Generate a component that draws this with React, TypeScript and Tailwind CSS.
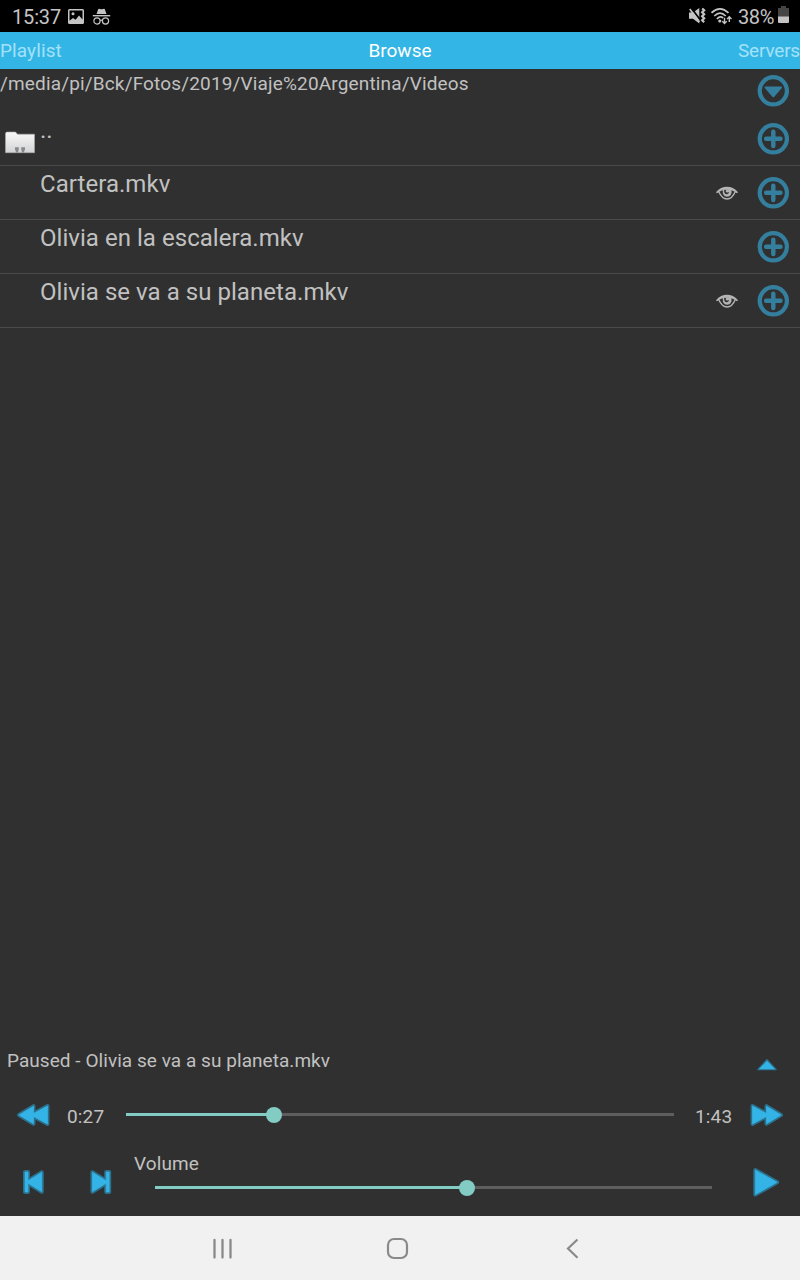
import type { ReactNode } from "react";

const files = [
  { name: "Cartera.mkv", watched: true },
  { name: "Olivia en la escalera.mkv", watched: false },
  { name: "Olivia se va a su planeta.mkv", watched: true },
];

function RoundIcon({ children }: { children: ReactNode }) {
  return (
    <svg className="h-8 w-8 shrink-0" viewBox="0 0 32 32" fill="none">
      <circle cx="16.300" cy="15.800" r="13.600" stroke="#347f9e" strokeWidth="4.200" />
      {children}
    </svg>
  );
}

function AddIcon() {
  return (
    <RoundIcon>
      <path d="M16.300 8.600V23M9.100 15.800H23.500" stroke="#347f9e" strokeWidth="4.400" strokeLinecap="round" />
    </RoundIcon>
  );
}

function DropIcon() {
  return (
    <RoundIcon>
      <path d="M8.500 12.400H24.100L16.300 21.300Z" fill="#347f9e" stroke="#347f9e" strokeWidth="2" strokeLinejoin="round" />
    </RoundIcon>
  );
}

function EyeIcon() {
  return (
    <svg className="h-4 w-6 shrink-0" viewBox="0 0 24 16" fill="none">
      <path d="M3.800 6.800C6 11.800 8.700 14 12.100 14s6-2.200 8.100-7.200" stroke="#b4b4b4" strokeWidth="1.400" />
      <path d="M1 7.200C4 3.400 8 1.700 12 1.700S20 3.400 23 7.200l-1 1C18.800 5.700 15.500 4.700 12 4.700S5.200 5.700 2 8.200Z" fill="#b4b4b4" />
      <path d="M7.800 4.400H16.500Q17.200 11.600 12.100 11.700 7.100 11.600 7.800 4.400Z" fill="#b4b4b4" />
      <path d="M9.200 4.900Q10.300 4.500 11.200 5.200 9.800 6.300 11.600 7.400q1.500.6 2.500-.6-.2 2.400-2.200 2.400Q8.700 8.800 9.200 4.900Z" fill="#303030" />
    </svg>
  );
}

function FolderIcon() {
  return (
    <svg className="h-6 w-8 shrink-0" viewBox="0 0 32 24">
      <defs>
        <linearGradient id="folder" x1="0" y1="0" x2="0" y2="1">
          <stop offset="0" stopColor="#f8f8f8" />
          <stop offset="1" stopColor="#d3d4d6" />
        </linearGradient>
      </defs>
      <path d="M1.500 3.200 2.500 2H11.500L13.500 4.200H30.500V22.700H1.500Z" fill="url(#folder)" stroke="#aaa" strokeWidth=".6" />
      <path d="M11 17.200h3.800v2l-.8 3.300h-1.900l-1.100-3.300zM17.200 17.200h3.800v2l-1.100 3.300H18l-.8-3.300z" fill="#88898b" />
    </svg>
  );
}

function MediaIcon({ className, box, d }: { className: string; box: string; d: string }) {
  return (
    <svg className={className} viewBox={box}>
      <path d={d} fill="#2c6f8b" stroke="#2c6f8b" strokeWidth="4" strokeLinejoin="round" />
      <path d={d} fill="#34b4e6" stroke="#34b4e6" strokeWidth=".7" />
    </svg>
  );
}

function Slider({ percent }: { percent: number }) {
  return (
    <div className="relative h-[3px] w-full bg-[#5e5e5e]">
      <div className="h-full bg-[#82ccc4]" style={{ width: `${percent}%` }} />
      <div
        className="absolute top-1/2 h-4 w-4 -translate-x-1/2 -translate-y-1/2 rounded-full bg-[#82ccc4]"
        style={{ left: `${percent}%` }}
      />
    </div>
  );
}

function StatusBar() {
  return (
    <div className="flex h-8 shrink-0 items-center bg-black text-[20px] leading-8 text-[#c4c4c4]">
      <span className="ml-3 w-[56px] pt-0.5 tracking-[-0.15px]">15:37</span>
      <svg className="mt-px h-4 w-4" viewBox="0 0 16 16">
        <path
          fill="#c4c4c4"
          fillRule="evenodd"
          d="M1.500 0h13A1.500 1.500 0 0 1 16 1.500v12a1.500 1.500 0 0 1-1.500 1.500h-13A1.500 1.500 0 0 1 0 13.500v-12A1.500 1.500 0 0 1 1.500 0ZM1.500 1.500v10.300L5 9l2.600 1.700L11 6.500l3.500 4V1.500Z"
        />
        <circle cx="5" cy="4.800" r="1.500" fill="#c4c4c4" />
      </svg>
      <svg className="mt-px ml-2 h-[18px] w-[19px]" viewBox="0 0 19 18" fill="none" stroke="#c4c4c4">
        <path d="M4.500 6 6.300.9Q7 .4 7.800.9L9.500 1.300 11.200.9Q12 .4 12.700.9L14.500 6Z" fill="#c4c4c4" stroke="none" />
        <path d="M.8 7.700H18.200" strokeWidth="1.400" />
        <circle cx="5" cy="13" r="3.100" strokeWidth="1.200" />
        <circle cx="13.500" cy="13" r="3.100" strokeWidth="1.200" />
        <path d="M8 12.600q1.300-.8 2.600 0" strokeWidth="1.200" />
      </svg>
      <div className="ml-auto flex items-center">
        <svg className="h-[18px] w-[18px]" viewBox="0 0 18 18" fill="none" stroke="#c4c4c4">
          <path d="M0 5.500H4L10.300 1V16.500L4 11.800H0Z" fill="#c4c4c4" stroke="none" />
          <path d="M2.200 1 11 12.500" stroke="#000" strokeWidth="1.800" />
          <path d="M.8 2 10.300 15" strokeWidth="1.700" />
          <path d="M13.200 1.500l1.900 1.700-1.900 2 1.900 2-1.900 2 1.900 2-1.900 2 1.900 2" strokeWidth="2.300" />
        </svg>
        <svg className="ml-1 h-[18px] w-[23px]" viewBox="0 0 23 18" fill="none" stroke="#c4c4c4" strokeWidth="1.700">
          <path d="M.5 5.800Q9 -2.200 17.500 5.800M3.300 9Q9 3.400 14.700 9M5.900 12Q9 8.500 12.100 11" />
          <circle cx="8.800" cy="14" r="1.600" fill="#c4c4c4" stroke="none" />
          <path d="M13.500 10.700v5.500m-2.200-2 2.200 2.200 2.200-2.200M18.300 15V9.700m-2.200 2.200 2.200-2.200 2.200 2.200" strokeWidth="1.400" />
        </svg>
        <span className="ml-1 w-[40px] pt-0.5 tracking-[-0.4px]">38%</span>
        <svg className="mr-[11px] mb-[3px] h-[17px] w-[11px]" viewBox="0 0 11 17">
          <path d="M3 0H8V2H11V11H0V2H3Z" fill="#454545" />
          <path d="M0 10.500H11V16Q11 17 10 17H1Q0 17 0 16Z" fill="#c4c4c4" />
        </svg>
      </div>
    </div>
  );
}

function Row({ children }: { children: ReactNode }) {
  return <li className="flex h-[54px] border-b border-[#4b4b4b] pr-[11px]">{children}</li>;
}

export default function App() {
  return (
    <div className="flex h-[1280px] w-[800px] flex-col overflow-hidden bg-[#303030] font-['Roboto',sans-serif] text-[#c1c1c1]">
      <StatusBar />
      <nav className="grid h-[37px] shrink-0 grid-cols-3 items-center bg-[#33b5e5] pt-[2px] text-[19px] text-[#a3e2fb]">
        <span className="tracking-[0.1px]">Playlist</span>
        <span className="text-center text-white">Browse</span>
        <span className="text-right tracking-[-0.2px]">Servers</span>
      </nav>
      <div className="flex h-[43px] shrink-0 justify-between pr-[11px] text-[19px]">
        <span className="pt-1 leading-[22px] tracking-[0.155px]">/media/pi/Bck/Fotos/2019/Viaje%20Argentina/Videos</span>
        <div className="pt-[6px]">
          <DropIcon />
        </div>
      </div>
      <ul>
        <Row>
          <div className="ml-1 w-9 pt-[18px]">
            <FolderIcon />
          </div>
          <span className="flex-1 pt-1 text-2xl leading-7">..</span>
          <div className="self-center">
            <AddIcon />
          </div>
        </Row>
        {files.map((file) => (
          <Row key={file.name}>
            <span className="flex-1 pt-1 pl-10 text-2xl leading-7 tracking-[0.04px]">{file.name}</span>
            <div className="flex items-center gap-[18px]">
              {file.watched && <EyeIcon />}
              <AddIcon />
            </div>
          </Row>
        ))}
      </ul>
      <footer className="mt-auto flex h-[172px] shrink-0 flex-col text-[19px]">
        <div className="flex h-[38px] items-center justify-between pr-[22px] pl-[7px]">
          <span className="mb-1 leading-[22px] tracking-[0.05px]">Paused - Olivia se va a su planeta.mkv</span>
          <svg className="mt-1 h-4 w-[22px]" viewBox="0 0 22 16">
            <path d="M2 12.500 11 2.800 20 12.500Z" fill="#2c6f8b" stroke="#2c6f8b" strokeWidth="1.500" strokeLinejoin="round" />
            <path d="M2.800 12.300 11 3.700 19.200 12.300Z" fill="#34b4e6" />
          </svg>
        </div>
        <div className="flex h-[66px] items-center">
          <MediaIcon className="ml-4 h-6 w-[35px]" box="0 0 35 24" d="M3 12 17.500 3.200V10.500L31.500 3V21L17.500 13.500V20.800Z" />
          <span className="mt-1 ml-4 w-[59px] tracking-[0.15px]">0:27</span>
          <div className="mb-px w-[548px]">
            <Slider percent={27} />
          </div>
          <span className="mt-1 ml-[21px] w-[54px] tracking-[0.15px]">1:43</span>
          <MediaIcon className="h-6 w-[35px]" box="0 0 35 24" d="M32 12 17.500 3.200V10.500L3.500 3V21L17.500 13.500V20.800Z" />
        </div>
        <div className="flex h-[68px]">
          <div className="flex w-[134px] items-center pl-[22px]">
            <MediaIcon className="h-7 w-6" box="0 0 24 28" d="M3 4H6V12.700L19.800 4.300V23.700L6 15.300V24H3Z" />
            <MediaIcon className="ml-[43px] h-7 w-6" box="0 0 24 28" d="M20.200 4H17.200V12.700L3.400 4.300V23.700L17.200 15.300V24H20.200Z" />
          </div>
          <div className="w-[578px]">
            <div className="h-[38px] pt-[5px] leading-[22px] tracking-[0.1px]">Volume</div>
            <div className="pl-[21px]">
              <Slider percent={56} />
            </div>
          </div>
          <MediaIcon className="ml-[40px] h-8 w-7 self-center" box="0 0 28 32" d="M3.300 4 25.200 16.300 3.300 28.600Z" />
        </div>
      </footer>
      <div className="flex h-16 shrink-0 items-center bg-[#f1f1f1]">
        <svg className="ml-[212px] h-6 w-5" viewBox="0 0 20 24" stroke="#8a8a8a" strokeWidth="2.300" strokeLinecap="round">
          <path d="M2.500 4V21.500M10.500 4V21.500M18.500 4V21.500" />
        </svg>
        <svg className="ml-[153px] h-6 w-6" viewBox="0 0 24 24" fill="none" stroke="#8a8a8a" strokeWidth="2.200">
          <rect x="3" y="3" width="19" height="19" rx="6" />
        </svg>
        <svg className="ml-[155px] h-6 w-4" viewBox="0 0 16 24" fill="none" stroke="#8a8a8a" strokeWidth="2.200">
          <path d="M13.500 3.500 4 12.500 13.500 21.700" />
        </svg>
      </div>
    </div>
  );
}
